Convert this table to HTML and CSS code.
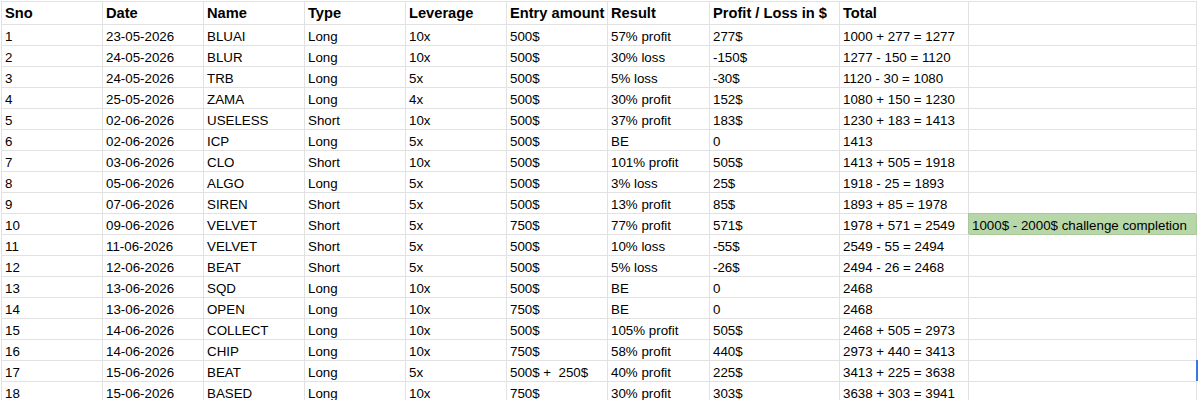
FILE: index.html
```html
<!DOCTYPE html>
<html lang="en">
<head>
<meta charset="utf-8">
<title>Trades</title>
<link rel="stylesheet" href="styles.css">
</head>
<body>
<div class="sheet">
  <div class="c h">Sno</div><div class="c h">Date</div><div class="c h">Name</div><div class="c h">Type</div><div class="c h">Leverage</div><div class="c h">Entry amount</div><div class="c h">Result</div><div class="c h">Profit / Loss in $</div><div class="c h">Total</div><div class="c h"></div>

  <div class="c">1</div><div class="c">23-05-2026</div><div class="c">BLUAI</div><div class="c">Long</div><div class="c">10x</div><div class="c">500$</div><div class="c">57% profit</div><div class="c">277$</div><div class="c">1000 + 277 = 1277</div><div class="c"></div>
  <div class="c">2</div><div class="c">24-05-2026</div><div class="c">BLUR</div><div class="c">Long</div><div class="c">10x</div><div class="c">500$</div><div class="c">30% loss</div><div class="c">-150$</div><div class="c">1277 - 150 = 1120</div><div class="c"></div>
  <div class="c">3</div><div class="c">24-05-2026</div><div class="c">TRB</div><div class="c">Long</div><div class="c">5x</div><div class="c">500$</div><div class="c">5% loss</div><div class="c">-30$</div><div class="c">1120 - 30 = 1080</div><div class="c"></div>
  <div class="c">4</div><div class="c">25-05-2026</div><div class="c">ZAMA</div><div class="c">Long</div><div class="c">4x</div><div class="c">500$</div><div class="c">30% profit</div><div class="c">152$</div><div class="c">1080 + 150 = 1230</div><div class="c"></div>
  <div class="c">5</div><div class="c">02-06-2026</div><div class="c">USELESS</div><div class="c">Short</div><div class="c">10x</div><div class="c">500$</div><div class="c">37% profit</div><div class="c">183$</div><div class="c">1230 + 183 = 1413</div><div class="c"></div>
  <div class="c">6</div><div class="c">02-06-2026</div><div class="c">ICP</div><div class="c">Long</div><div class="c">5x</div><div class="c">500$</div><div class="c">BE</div><div class="c">0</div><div class="c">1413</div><div class="c"></div>
  <div class="c">7</div><div class="c">03-06-2026</div><div class="c">CLO</div><div class="c">Short</div><div class="c">10x</div><div class="c">500$</div><div class="c">101% profit</div><div class="c">505$</div><div class="c">1413 + 505 = 1918</div><div class="c"></div>
  <div class="c">8</div><div class="c">05-06-2026</div><div class="c">ALGO</div><div class="c">Long</div><div class="c">5x</div><div class="c">500$</div><div class="c">3% loss</div><div class="c">25$</div><div class="c">1918 - 25 = 1893</div><div class="c"></div>
  <div class="c">9</div><div class="c">07-06-2026</div><div class="c">SIREN</div><div class="c">Short</div><div class="c">5x</div><div class="c">500$</div><div class="c">13% profit</div><div class="c">85$</div><div class="c">1893 + 85 = 1978</div><div class="c"></div>
  <div class="c">10</div><div class="c">09-06-2026</div><div class="c">VELVET</div><div class="c">Short</div><div class="c">5x</div><div class="c">750$</div><div class="c">77% profit</div><div class="c">571$</div><div class="c">1978 + 571 = 2549</div><div class="c note">1000$ - 2000$ challenge completion</div>
  <div class="c">11</div><div class="c">11-06-2026</div><div class="c">VELVET</div><div class="c">Short</div><div class="c">5x</div><div class="c">500$</div><div class="c">10% loss</div><div class="c">-55$</div><div class="c">2549 - 55 = 2494</div><div class="c"></div>
  <div class="c">12</div><div class="c">12-06-2026</div><div class="c">BEAT</div><div class="c">Short</div><div class="c">5x</div><div class="c">500$</div><div class="c">5% loss</div><div class="c">-26$</div><div class="c">2494 - 26 = 2468</div><div class="c"></div>
  <div class="c">13</div><div class="c">13-06-2026</div><div class="c">SQD</div><div class="c">Long</div><div class="c">10x</div><div class="c">500$</div><div class="c">BE</div><div class="c">0</div><div class="c">2468</div><div class="c"></div>
  <div class="c">14</div><div class="c">13-06-2026</div><div class="c">OPEN</div><div class="c">Long</div><div class="c">10x</div><div class="c">750$</div><div class="c">BE</div><div class="c">0</div><div class="c">2468</div><div class="c"></div>
  <div class="c">15</div><div class="c">14-06-2026</div><div class="c">COLLECT</div><div class="c">Long</div><div class="c">10x</div><div class="c">500$</div><div class="c">105% profit</div><div class="c">505$</div><div class="c">2468 + 505 = 2973</div><div class="c"></div>
  <div class="c">16</div><div class="c">14-06-2026</div><div class="c">CHIP</div><div class="c">Long</div><div class="c">10x</div><div class="c">750$</div><div class="c">58% profit</div><div class="c">440$</div><div class="c">2973 + 440 = 3413</div><div class="c"></div>
  <div class="c">17</div><div class="c">15-06-2026</div><div class="c">BEAT</div><div class="c">Long</div><div class="c">5x</div><div class="c">500$ +  250$</div><div class="c">40% profit</div><div class="c">225$</div><div class="c">3413 + 225 = 3638</div><div class="c"></div>
  <div class="c">18</div><div class="c">15-06-2026</div><div class="c">BASED</div><div class="c">Long</div><div class="c">10x</div><div class="c">750$</div><div class="c">30% profit</div><div class="c">303$</div><div class="c">3638 + 303 = 3941</div><div class="c"></div>
</div>
<div class="sel"></div>
</body>
</html>
```
FILE: styles.css
```css
html, body {
  margin: 0;
  padding: 0;
  background: #ffffff;
  overflow: hidden;
}

body {
  font-family: "Liberation Sans", Arial, sans-serif;
  color: #000000;
  position: relative;
  width: 1198px;
  height: 400px;
}

.sheet {
  display: grid;
  grid-template-columns: 101px 101px 101px 101px 101px 101px 102px 130px 129px 228px;
  grid-template-rows: 23px;
  grid-auto-rows: 21px;
  margin: 1px 0 0 1px;
  width: max-content;
  border-top: 1px solid #e2e2e3;
  border-left: 1px solid #e2e2e3;
}

.c {
  box-sizing: border-box;
  border-right: 1px solid #e2e2e3;
  border-bottom: 1px solid #e2e2e3;
  display: flex;
  align-items: flex-end;
  padding: 0 3px 1px 3px;
  font-size: 13.33px;
  line-height: 15px;
  white-space: pre;
  overflow: visible;
}

.h {
  font-weight: bold;
  font-size: 14.67px;
  line-height: 17px;
  padding-bottom: 2px;
}

.note {
  background: #b7d7a8;
  box-shadow: -1px -1px 0 #a9c99b;
  border-right-color: #a9c99b;
  border-bottom-color: #a9c99b;
  position: relative;
}

.sel {
  position: absolute;
  left: 1196px;
  top: 360px;
  width: 2px;
  height: 21px;
  background: #3a76e6;
}
```
